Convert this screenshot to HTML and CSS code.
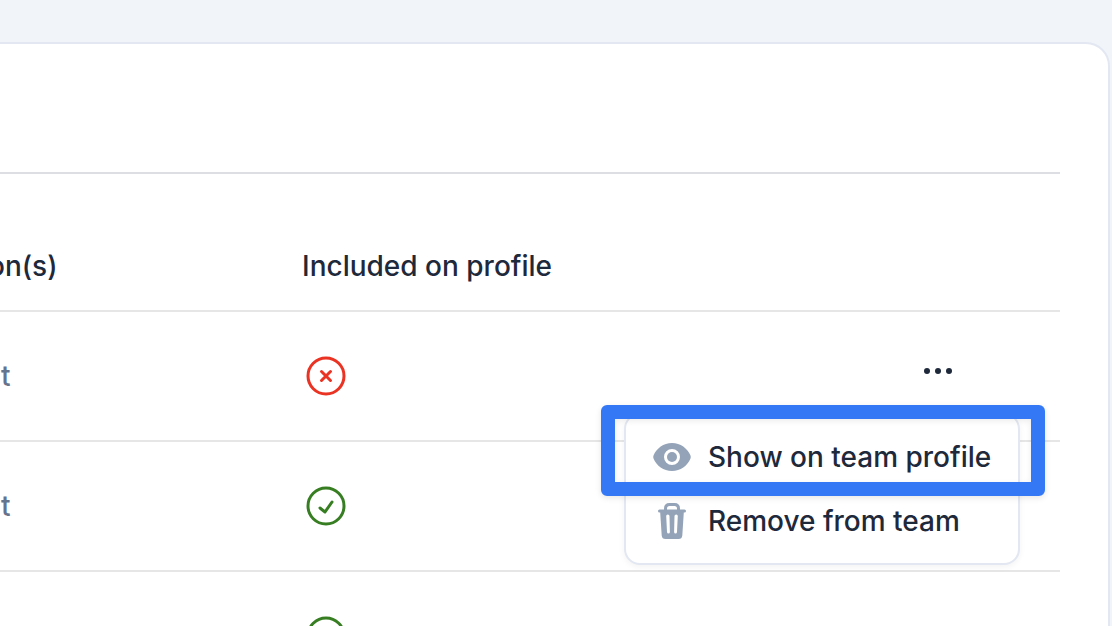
FILE: index.html
```html
<!DOCTYPE html>
<html lang="en">
<head>
  <meta charset="UTF-8" />
  <meta name="viewport" content="width=device-width, initial-scale=1.0"/>
  <title>Team members</title>
  <link rel="stylesheet" href="styles.css">
</head>
<body>

  <main class="card">
    <div class="card-header"></div>

    <table class="members">
      <colgroup>
        <col class="col-location">
        <col class="col-included">
        <col>
      </colgroup>
      <thead>
        <tr>
          <th>on(s)</th>
          <th>Included on profile</th>
          <td></td>
        </tr>
      </thead>
      <tbody>
        <tr>
          <td class="location">t</td>
          <td>
            <svg class="status no" viewBox="0 0 40 40" role="img" aria-label="No">
              <circle cx="20" cy="20" r="18"/>
              <path d="M15.500 15.500l9 9M24.500 15.500l-9 9"/>
            </svg>
          </td>
          <td class="actions">
            <button type="button" class="more" aria-label="Actions">
              <svg viewBox="0 0 30 8">
                <circle cx="4" cy="4" r="3"/>
                <circle cx="15" cy="4" r="3"/>
                <circle cx="26" cy="4" r="3"/>
              </svg>
            </button>

            <!-- Row menu -->
            <div class="menu">
              <button type="button" class="menu-item">
                <svg viewBox="0 0 40 40">
                  <path fill-rule="evenodd" d="M20 6C11.500 6 4.500 11.500 1.600 18.300Q.8 20 1.600 21.700C4.500 28.500 11.500 34 20 34S35.500 28.500 38.400 21.700Q39.200 20 38.400 18.300C35.500 11.500 28.500 6 20 6zM20 12a8 8 0 1 1 0 16a8 8 0 0 1 0-16z"/>
                  <circle cx="20" cy="20" r="5"/>
                </svg>
                Show on team profile
              </button>
              <button type="button" class="menu-item">
                <svg viewBox="0 0 40 40">
                  <path class="handle" d="M13.500 9V7.500Q13.500 3.500 17.500 3.500H22.500Q26.500 3.500 26.500 7.500V9"/>
                  <path fill-rule="evenodd" d="M7.500 8.500H32.500Q34 8.500 34 10T32.500 11.500H31.800L30.300 34.500Q30 38 26.500 38H13.500Q10 38 9.700 34.500L8.200 11.500H7.500Q6 11.500 6 10T7.500 8.500zM14.200 15L15 31Q15.100 32.500 16.500 32.500T17.900 31L17.500 15Q17.500 13.500 15.800 13.500T14.200 15zM22.500 15L22.100 31Q22.100 32.500 23.500 32.500T25 31L25.800 15Q25.800 13.500 24.200 13.500T22.500 15z"/>
                </svg>
                Remove from team
              </button>
              <div class="highlight"></div>
            </div>
          </td>
        </tr>
        <tr>
          <td class="location">t</td>
          <td>
            <svg class="status yes" viewBox="0 0 40 40" role="img" aria-label="Yes">
              <circle cx="20" cy="20" r="18"/>
              <path d="M14 22l5 4L26 16"/>
            </svg>
          </td>
          <td></td>
        </tr>
        <tr>
          <td class="location"></td>
          <td>
            <svg class="status yes" viewBox="0 0 40 40" role="img" aria-label="Yes">
              <circle cx="20" cy="20" r="18"/>
              <path d="M14 22l5 4L26 16"/>
            </svg>
          </td>
          <td></td>
        </tr>
      </tbody>
    </table>
  </main>

</body>
</html>
```

FILE: styles.css
```css
* {
  box-sizing: border-box;
}

body {
  margin: 0;
  height: 100vh;
  padding: 42px 2px 0 0;
  overflow: hidden;
  background-color: #f1f5fa;
  color: #1e293b;
  font-family: Inter, "Liberation Sans", sans-serif;
  font-size: 28px;
  font-weight: 500;
  line-height: 40px;
}

button {
  border: none;
  background: none;
  color: inherit;
  font: inherit;
  cursor: pointer;
}

.card {
  padding-right: 48px;
  background-color: #fff;
  border: 2px solid #e2e7f1;
  border-left: none;
  border-radius: 0 24px 0 0;
}

.card-header {
  height: 130px;
  border-bottom: 2px solid #dddee4;
}

/* the first column runs off the left edge */
.members {
  width: calc(100% + 12px);
  margin-left: -12px;
  table-layout: fixed;
  border-collapse: separate;
  border-spacing: 0;
}

.col-location {
  width: 314px;
}

.col-included {
  width: 300px;
}

th, td {
  height: 130px;
  padding: 0;
  border-bottom: 2px solid #e6e6e6;
  font-weight: 500;
  text-align: left;
  vertical-align: middle;
}

thead th, thead td {
  height: 138px;
  padding-top: 48px;
}

.location {
  padding-left: 13px;
  color: #64748f;
}

.status {
  display: block;
  width: 40px;
  height: 40px;
  margin-left: 4px;
  fill: none;
  stroke: currentColor;
  stroke-width: 3;
  stroke-linecap: round;
  stroke-linejoin: round;
}

.no {
  color: #ea3323;
}

.yes {
  color: #377e22;
}

.actions {
  position: relative;
  padding: 0 98px 10px 0;
}

.more {
  display: block;
  width: 48px;
  height: 40px;
  margin-left: auto;
  padding: 0 9px;
}

.more svg {
  display: block;
  width: 30px;
  height: 8px;
  fill: #1e293b;
}

.menu {
  position: absolute;
  top: 101px;
  right: 40px;
  width: 396px;
  padding: 10px 0;
  background-color: #fff;
  border: 2px solid #e2e7f1;
  border-radius: 16px;
  box-shadow: 0 2px 6px rgba(0,0,0,0.05);
}

.menu-item {
  display: flex;
  align-items: center;
  gap: 16px;
  width: 100%;
  height: 64px;
  padding: 0 26px;
  white-space: nowrap;
}

.menu-item svg {
  flex: none;
  width: 40px;
  height: 40px;
  fill: #94a3b8;
}

.handle {
  fill: none;
  stroke: #94a3b8;
  stroke-width: 3;
}

.highlight {
  position: absolute;
  top: -10px;
  left: -25px;
  right: -27px;
  height: 91px;
  border: 14px solid #3478f6;
  border-radius: 6px;
  box-shadow: 0 2px 6px rgba(0,0,0,0.1), inset 0 2px 6px rgba(0,0,0,0.08);
  pointer-events: none;
}
```
